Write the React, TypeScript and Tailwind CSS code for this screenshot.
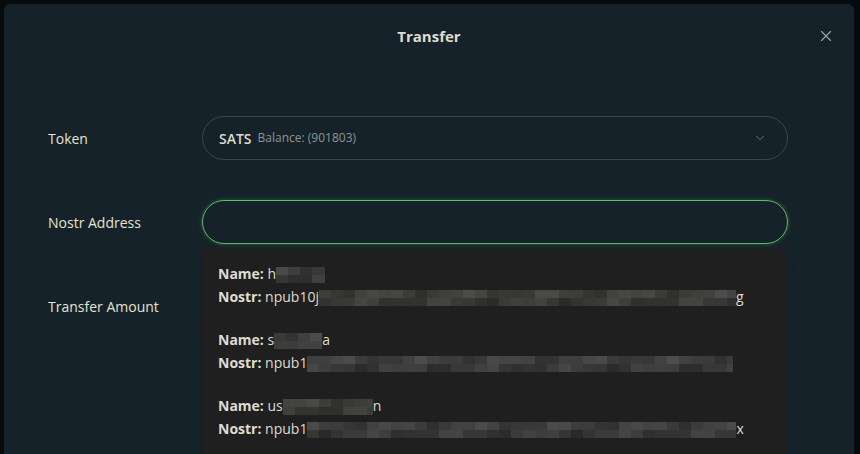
import React from 'react';
import { X, ChevronDown } from 'lucide-react';

// pixelated blur blocks standing in for hidden names / keys
const Mosaic = ({ width, seed }: { width: number; seed: number }) => {
  const cells = Math.ceil(width / 12);
  const shade = (i: number, row: number) => {
    const v = 62 + Math.sin(seed * 2.3 + i * 0.9 + row * 1.7) * 10 + Math.sin(i * 2.1 + seed) * 5 - row * 6;
    const c = Math.round(v);
    return `rgb(${c},${c},${c - 2})`;
  };
  return (
    <span className="inline-flex flex-col align-middle" style={{ width }}>
      {[0, 1].map((row) => (
        <span key={row} className="flex h-[8px] overflow-hidden">
          {Array.from({ length: cells }).map((_, i) => (
            <span key={i} className="h-full w-[12px] shrink-0" style={{ background: shade(i, row) }} />
          ))}
        </span>
      ))}
    </span>
  );
};

const contacts = [
  { name: 'h', nameBlur: 49, nameTail: '', npub: 'npub10j', npubBlur: 417, npubTail: 'g' },
  { name: 's', nameBlur: 48, nameTail: 'a', npub: 'npub1', npubBlur: 426, npubTail: '' },
  { name: 'us', nameBlur: 90, nameTail: 'n', npub: 'npub1', npubBlur: 429, npubTail: 'x' },
];

const Row = ({ label, children }: { label: string; children?: React.ReactNode }) => (
  <div className="flex items-center h-11">
    <div className="w-[154px] text-[14px] text-[#e4e2d4]">{label}</div>
    <div className="flex-1 h-full relative">{children}</div>
  </div>
);

export default function App() {
  return (
    <div
      className="h-[454px] overflow-hidden bg-[#060c0e] pt-1 pl-1"
      style={{ fontFamily: '"Open Sans", Lato, sans-serif' }}
    >
      <div className="w-[850px] h-[470px] bg-[#162229] rounded-md relative">
        <div className="h-16 flex items-center justify-center">
          <h2 className="text-[15px] font-bold text-[#dedccf]">Transfer</h2>
        </div>
        <button className="absolute right-[19px] top-[23px] text-[#a3a6a5]">
          <X className="w-[18px] h-[18px]" strokeWidth={1.5} />
        </button>

        <div className="pl-[44px] pr-[66px] mt-12 flex flex-col gap-10">
          <Row label="Token">
            <div className="h-full rounded-full border border-[#3d4548] flex items-center pl-4 pr-5">
              <span className="text-[14px] font-semibold text-[#dcdace]">SATS</span>
              <span className="ml-[6px] text-[12px] text-[#8d9497]">Balance: (901803)</span>
              <ChevronDown className="ml-auto w-[14px] h-[14px] text-[#737a7c]" strokeWidth={1.5} />
            </div>
          </Row>

          <Row label="Nostr Address">
            <input
              className="w-full h-full rounded-full border border-[#5cbd63] bg-transparent outline-none shadow-[0_0_4px_rgba(92,189,99,0.4)] px-4 text-[#e4e2d4]"
            />
            <div className="absolute left-0 right-0 top-[48px] z-10 bg-[#1f1f1f] rounded-md pt-1 pb-4 shadow-lg">
              {contacts.map((c, idx) => (
                <div key={idx} className="px-4 py-[10px] text-[14px] text-[#dedccf]">
                  <div className="leading-[23px] whitespace-nowrap">
                    <span className="font-bold">Name:</span> {c.name}
                    <Mosaic width={c.nameBlur} seed={idx + 1} />
                    {c.nameTail}
                  </div>
                  <div className="leading-[23px] whitespace-nowrap">
                    <span className="font-bold">Nostr:</span> {c.npub}
                    <Mosaic width={c.npubBlur} seed={idx + 7} />
                    {c.npubTail}
                  </div>
                </div>
              ))}
            </div>
          </Row>

          <Row label="Transfer Amount" />
        </div>
      </div>
    </div>
  );
}
